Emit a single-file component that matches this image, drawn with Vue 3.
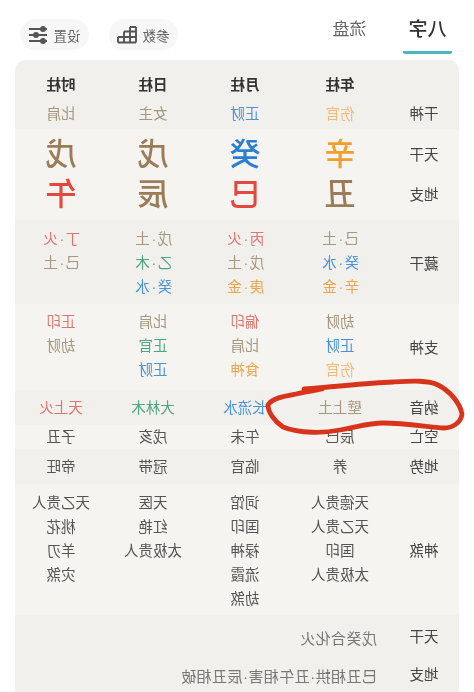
<script setup>
const pillars = [
  {
    name: '年柱', god: ['伤官', 'c-orange-l'], stem: ['辛', 'b-orange'], branch: ['丑', 'b-brown'],
    hidden: [['己·土', 'c-brown'], ['癸·水', 'c-blue'], ['辛·金', 'c-orange']],
    gods: [['劫财', 'c-brown'], ['正财', 'c-blue'], ['伤官', 'c-orange-l']],
    nayin: ['壁上土', 'c-brown'], empty: '辰巳', stage: '养',
    stars: ['天德贵人', '天乙贵人', '国印', '太极贵人']
  },
  {
    name: '月柱', god: ['正财', 'c-blue'], stem: ['癸', 'b-blue'], branch: ['巳', 'b-red'],
    hidden: [['丙·火', 'c-red'], ['戊·土', 'c-brown'], ['庚·金', 'c-orange']],
    gods: [['偏印', 'c-red'], ['比肩', 'c-brown'], ['食神', 'c-orange']],
    nayin: ['长流水', 'c-blue'], empty: '午未', stage: '临官',
    stars: ['词馆', '国印', '禄神', '流霞', '劫煞']
  },
  {
    name: '日柱', god: ['女主', 'c-brown'], stem: ['戊', 'b-brown'], branch: ['辰', 'b-brown'],
    hidden: [['戊·土', 'c-brown'], ['乙·木', 'c-green'], ['癸·水', 'c-blue']],
    gods: [['比肩', 'c-brown'], ['正官', 'c-green'], ['正财', 'c-blue']],
    nayin: ['大林木', 'c-green'], empty: '戌亥', stage: '冠带',
    stars: ['天医', '红艳', '太极贵人']
  },
  {
    name: '时柱', god: ['比肩', 'c-brown'], stem: ['戊', 'b-brown'], branch: ['午', 'b-red'],
    hidden: [['丁·火', 'c-red'], ['己·土', 'c-brown']],
    gods: [['正印', 'c-red'], ['劫财', 'c-brown']],
    nayin: ['天上火', 'c-red'], empty: '子丑', stage: '帝旺',
    stars: ['天乙贵人', '桃花', '羊刃', '灾煞']
  }
]
const relations = [
  ['天干', '戊癸合化火'],
  ['地支', '巳丑相拱·丑午相害·辰丑相破']
]
</script>

<template>
  <div class="screen">
    <div class="mirror">
      <header class="top">
        <nav class="tabs">
          <span class="tab active">八字</span>
          <span class="tab">流盘</span>
        </nav>
        <div class="pills">
          <span class="pill">
            参数
            <svg width="20" height="18" viewBox="0 0 20 18" fill="none" stroke="#555" stroke-width="1.9">
              <path d="M1 16.500h18M1 11h18M1 5.500h12M1 1h6M1 1v15.500M7 1v15.500M13 5.500v11M19 11v5.500" />
            </svg>
          </span>
          <span class="pill">
            设置
            <svg width="20" height="18" viewBox="0 0 20 18" fill="#555" stroke="#555" stroke-width="2">
              <path d="M1 3h18M1 9h18M1 15h18" />
              <circle cx="5" cy="3" r="2" />
              <circle cx="12" cy="9" r="2" />
              <circle cx="5" cy="15" r="2" />
            </svg>
          </span>
        </div>
      </header>

      <main class="card">
        <section class="row dark head">
          <div class="label bottom">干神</div>
          <div v-for="p in pillars" :key="p.name" class="cell">
            <div class="title">{{ p.name }}</div>
            <div :class="p.god[1]">{{ p.god[0] }}</div>
          </div>
        </section>

        <section class="row light big">
          <div class="label stack">
            <div>天干</div>
            <div>地支</div>
          </div>
          <div v-for="p in pillars" :key="p.name" class="cell">
            <div class="char" :class="p.stem[1]">{{ p.stem[0] }}</div>
            <div class="char" :class="p.branch[1]">{{ p.branch[0] }}</div>
          </div>
        </section>

        <section class="row dark hidden">
          <div class="label">藏干</div>
          <div v-for="p in pillars" :key="p.name" class="cell spaced">
            <div v-for="h in p.hidden" :key="h[0]" :class="h[1]">{{ h[0] }}</div>
          </div>
        </section>

        <section class="row light gods">
          <div class="label">支神</div>
          <div v-for="p in pillars" :key="p.name" class="cell">
            <div v-for="g in p.gods" :key="g[0]" :class="g[1]">{{ g[0] }}</div>
          </div>
        </section>

        <section class="row dark single tall">
          <div class="label">纳音</div>
          <div v-for="p in pillars" :key="p.name" class="cell" :class="p.nayin[1]">{{ p.nayin[0] }}</div>
        </section>

        <section class="row light single short">
          <div class="label">空亡</div>
          <div v-for="p in pillars" :key="p.name" class="cell ink">{{ p.empty }}</div>
        </section>

        <section class="row dark single tall">
          <div class="label">地势</div>
          <div v-for="p in pillars" :key="p.name" class="cell ink">{{ p.stage }}</div>
        </section>

        <section class="row light stars">
          <div class="label">神煞</div>
          <div v-for="p in pillars" :key="p.name" class="cell ink">
            <div v-for="s in p.stars" :key="s">{{ s }}</div>
          </div>
        </section>

        <section class="relations dark">
          <div v-for="r in relations" :key="r[0]" class="relation">
            <div class="label">{{ r[0] }}</div>
            <div class="relation-text">{{ r[1] }}</div>
          </div>
        </section>
      </main>
    </div>

    <svg class="scribble" width="474" height="692" viewBox="0 0 474 692" fill="none">
      <path
        d="M304 389 C335 387 365 383 393 382 C412 381 428 380 438 385 C450 391 460 403 462 414 C461 423 452 428 444 428 C428 427 405 423 383 423 C368 423 358 427 340 430 C325 433 300 434 283 427 C274 421 268 412 268 405 C272 398 285 396 296 394 C305 392 312 391 322 389"
        stroke="#d8341c"
        stroke-width="4.8"
        stroke-linecap="round"
        stroke-linejoin="round"
      />
    </svg>
  </div>
</template>

<style>
body {
  background: #fff;
}
</style>

<style scoped>
.screen {
  position: relative;
  width: 474px;
  height: 692px;
  overflow: hidden;
  background: #fff;
  font-family: "Liberation Sans", "Noto Sans CJK SC", sans-serif;
}
.mirror {
  height: 692px;
  transform: scaleX(-1);
  filter: blur(0.45px);
}
.top {
  display: flex;
  justify-content: space-between;
  height: 60px;
  padding: 0 20px 0 22px;
  box-sizing: border-box;
}
.tabs {
  display: flex;
  gap: 29px;
}
.tab {
  box-sizing: border-box;
  width: 49px;
  height: 54px;
  padding-top: 16px;
  text-align: center;
  font-size: 17px;
  line-height: 28px;
  color: #666;
}
.tab.active {
  font-size: 19px;
  color: #333;
  font-weight: 500;
  border-bottom: 3px solid #4db4c4;
  border-radius: 2px;
}
.pills {
  display: flex;
  gap: 20px;
  padding-top: 19px;
}
.pill {
  display: flex;
  align-items: center;
  justify-content: center;
  gap: 5px;
  box-sizing: border-box;
  width: 69px;
  height: 31px;
  border-radius: 16px;
  background: #f7f7f7;
  font-size: 13.5px;
  color: #666;
}
.card {
  margin: 0 15px;
  height: 632px;
  overflow: hidden;
  border-radius: 10px 10px 0 0;
}
.dark {
  background: #f2f0ec;
}
.light {
  background: #f6f4f1;
}
.row {
  display: grid;
  grid-template-columns: 70px 98px 92px 92px 92px;
  box-sizing: border-box;
  font-size: 14.5px;
  line-height: 24px;
}
.label {
  display: flex;
  flex-direction: column;
  align-items: center;
  justify-content: center;
  font-size: 14.5px;
  line-height: 24px;
  color: #444;
}
.label.bottom {
  justify-content: flex-end;
}
.cell {
  text-align: center;
}
.spaced {
  letter-spacing: 1.5px;
}
.head {
  height: 69px;
  padding: 13px 0 5px;
}
.title {
  margin-bottom: 5px;
  font-weight: 700;
  color: #333;
}
.big {
  height: 91px;
  padding: 6px 0 7px;
}
.label.stack {
  gap: 16px;
}
.char {
  font-size: 31px;
  line-height: 40px;
  font-weight: 500;
}
.hidden {
  height: 84px;
  padding: 7px 0 3px;
}
.gods {
  height: 86px;
  padding: 6px 0 4px;
}
.single {
  align-items: center;
}
.tall {
  height: 35px;
}
.short {
  height: 24px;
}
.stars {
  height: 131px;
  padding: 7px 0 4px;
}
.relations {
  height: 77px;
  padding-top: 3px;
  box-sizing: border-box;
}
.relation {
  display: grid;
  grid-template-columns: 70px 1fr;
  height: 38px;
  align-items: center;
}
.relation-text {
  padding-left: 12px;
  font-size: 15px;
  letter-spacing: 0.45px;
  color: #777;
}
.ink {
  color: #555;
}
.c-orange {
  color: #eaa64e;
}
.c-orange-l {
  color: #efbb78;
}
.c-blue {
  color: #4a94d6;
}
.c-red {
  color: #dd7672;
}
.c-brown {
  color: #a6977f;
}
.c-green {
  color: #4ea680;
}
.b-orange {
  color: #ef9f2e;
}
.b-blue {
  color: #2a7fd0;
}
.b-red {
  color: #e2483f;
}
.b-brown {
  color: #9a7d58;
}
.scribble {
  position: absolute;
  inset: 0;
  pointer-events: none;
}
</style>
